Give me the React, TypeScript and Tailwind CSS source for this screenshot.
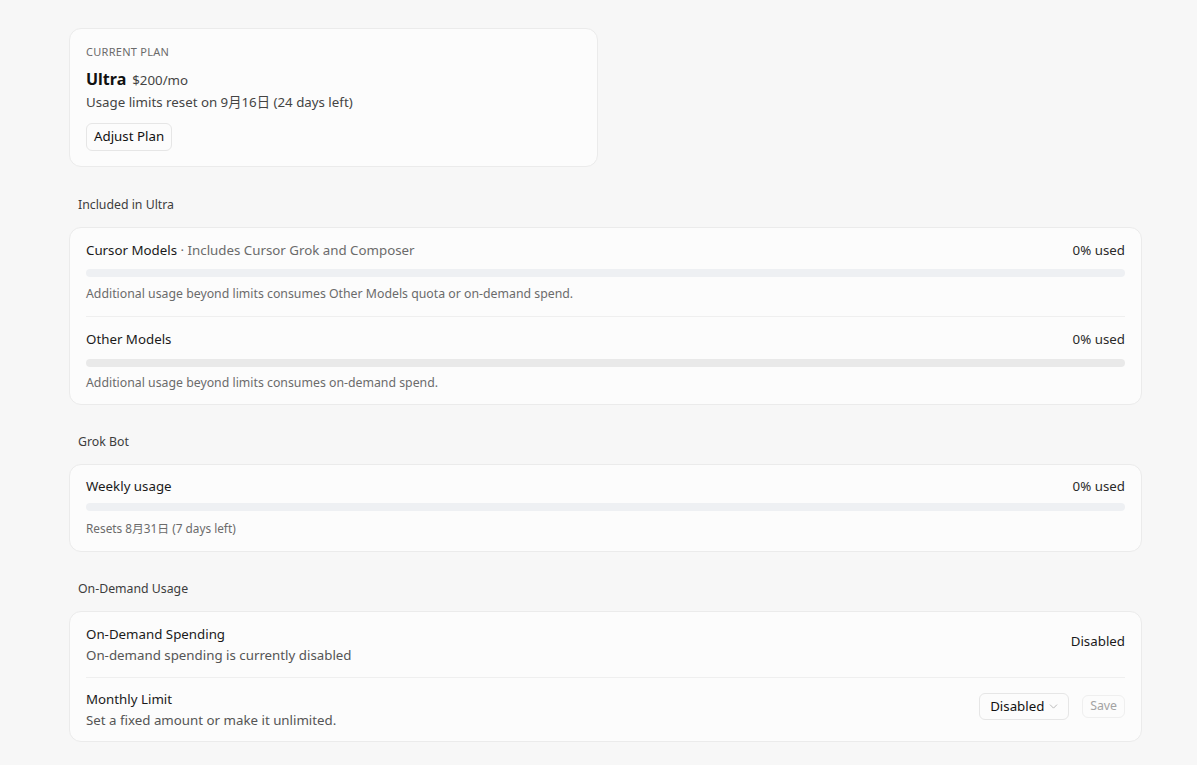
import React from "react";
import { ChevronDown } from "lucide-react";

const font = {
  fontFamily: '"Noto Sans", "Noto Sans CJK SC", sans-serif',
};

type Meter = {
  title: string;
  note?: string;
  used: number;
  caption: string;
  track: string;
};

const included: Meter[] = [
  {
    title: "Cursor Models",
    note: "Includes Cursor Grok and Composer",
    used: 0,
    caption: "Additional usage beyond limits consumes Other Models quota or on-demand spend.",
    track: "bg-[#eef0f3]",
  },
  {
    title: "Other Models",
    used: 0,
    caption: "Additional usage beyond limits consumes on-demand spend.",
    track: "bg-[#e9e9e9]",
  },
];

const Card = ({ children }: { children: React.ReactNode }) => (
  <div className="rounded-xl border border-[#ebebeb] bg-[#fcfcfc] px-4">{children}</div>
);

const SectionLabel = ({ children, first }: { children: React.ReactNode; first?: boolean }) => (
  <div className={`${first ? "mt-[30px]" : "mt-[29px]"} mb-[14px] pl-[9px] text-[12.3px] leading-4 text-[#3d3d3d]`}>
    {children}
  </div>
);

const MeterRow = ({ m, last }: { m: Meter; last?: boolean }) => (
  <div className={`pt-3 ${last ? "pb-[13px]" : "pb-[14px] border-b border-[#efefef]"}`}>
    <div className="flex items-center justify-between text-[13.3px] leading-5">
      <div className="text-[#1a1a1a]">
        {m.title}
        {m.note && <span className="text-[#6b6b6b]"> · {m.note}</span>}
      </div>
      <div className="text-[#2a2a2a]">{m.used}% used</div>
    </div>
    <div className={`${last ? "mt-[10px]" : "mt-[9px]"} h-2 w-full overflow-hidden rounded-full ${m.track}`}>
      <div className="h-full rounded-full bg-[#3b82f6]" style={{ width: `${m.used}%` }} />
    </div>
    <div className={`${last ? "mt-2" : "mt-[9px]"} text-[12.3px] leading-4 text-[#6b6b6b]`}>{m.caption}</div>
  </div>
);

export default function App() {
  return (
    <div className="min-h-screen bg-[#f7f7f7]" style={font}>
      <div className="ml-[69px] w-[1073px] pt-7 pb-6">
        {/* plan summary */}
        <div className="grid grid-cols-2 gap-4">
          <div className="rounded-xl border border-[#ebebeb] bg-[#fcfcfc] px-4 pt-[15px] pb-[15px]">
            <div className="text-[11px] leading-4 tracking-wide text-[#6b6b6b]">CURRENT PLAN</div>
            <div className="mt-[7px] flex items-baseline gap-1.5 leading-6">
              <span className="text-[16px] font-bold text-[#111]">Ultra</span>
              <span className="text-[13.3px] text-[#444]">$200/mo</span>
            </div>
            <div className="text-[13.3px] leading-5 text-[#444]">Usage limits reset on 9月16日 (24 days left)</div>
            <button className="mt-[11px] h-7 rounded-md border border-[#e6e6e6] bg-[#fcfcfc] px-[7px] text-[13.3px] text-[#111]">
              Adjust Plan
            </button>
          </div>
        </div>

        <SectionLabel first>Included in Ultra</SectionLabel>
        <Card>
          {included.map((m, i) => (
            <MeterRow key={m.title} m={m} last={i === included.length - 1} />
          ))}
        </Card>

        <SectionLabel>Grok Bot</SectionLabel>
        <Card>
          <div className="pt-[11px] pb-[15px]">
            <div className="flex items-center justify-between text-[13.3px] leading-5">
              <div className="text-[#1a1a1a]">Weekly usage</div>
              <div className="text-[#2a2a2a]">0% used</div>
            </div>
            <div className="mt-[7px] h-2 w-full rounded-full bg-[#eef0f3]" />
            <div className="mt-[9px] text-[11.8px] leading-4 text-[#6b6b6b]">Resets 8月31日 (7 days left)</div>
          </div>
        </Card>

        <SectionLabel>On-Demand Usage</SectionLabel>
        <Card>
          <div className="flex items-start justify-between border-b border-[#efefef] pt-3 pb-[11px]">
            <div className="text-[13.3px] leading-[21px]">
              <div className="text-[#1a1a1a]">On-Demand Spending</div>
              <div className="text-[#555]">On-demand spending is currently disabled</div>
            </div>
            <div className="mt-[7px] text-[13.3px] leading-5 text-[#1a1a1a]">Disabled</div>
          </div>
          <div className="flex items-start justify-between pt-[11px] pb-[10px]">
            <div className="text-[13.3px] leading-[21px]">
              <div className="text-[#1a1a1a]">Monthly Limit</div>
              <div className="text-[#555]">Set a fixed amount or make it unlimited.</div>
            </div>
            <div className="mt-1 flex items-center gap-[13px]">
              <button className="flex h-[27px] w-[90px] items-center justify-between rounded-md border border-[#e6e6e6] bg-[#fcfcfc] pl-[10px] pr-2 text-[13.3px] text-[#111]">
                Disabled
                <ChevronDown size={13} strokeWidth={1.5} className="text-[#aaa]" />
              </button>
              <button className="h-[23px] rounded-md border border-[#efefef] bg-[#fcfcfc] px-[7px] text-[12.3px] text-[#a3a3a3]">
                Save
              </button>
            </div>
          </div>
        </Card>
      </div>
    </div>
  );
}
